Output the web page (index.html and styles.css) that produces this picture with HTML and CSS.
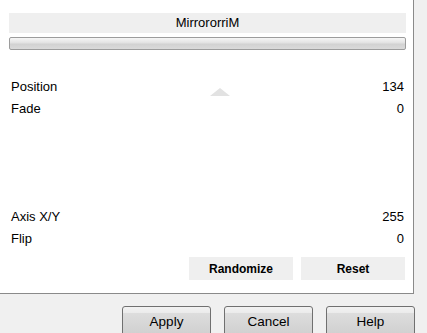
FILE: index.html
```html
<!DOCTYPE html>
<html lang="en">
<head>
<meta charset="UTF-8">
<meta name="viewport" content="width=device-width, initial-scale=1.0">
<title>MirrororriM</title>
<link rel="stylesheet" href="styles.css">
</head>
<body>

<div class="dialog">
    <!-- Filter panel -->
    <div class="panel">
        <div class="title">MirrororriM</div>
        <div class="progress"></div>

        <div class="params">
            <div class="marker"></div>
            <div class="row"><span>Position</span><span>134</span></div>
            <div class="row"><span>Fade</span><span>0</span></div>
            <div class="spacer"></div>
            <div class="row"><span>Axis X/Y</span><span>255</span></div>
            <div class="row"><span>Flip</span><span>0</span></div>
        </div>

        <div class="tools">
            <button class="tool">Randomize</button>
            <button class="tool">Reset</button>
        </div>
    </div>

    <!-- Dialog buttons -->
    <div class="actions">
        <button class="btn">Apply</button>
        <button class="btn">Cancel</button>
        <button class="btn">Help</button>
    </div>
</div>

</body>
</html>
```

FILE: styles.css
```css
/* Dialog styles */
body {
    margin: 0;
    padding: 0;
    background-color: #f0f0f0;
    font-family: "Liberation Sans", Arial, sans-serif;
    color: #000;
    overflow: hidden;
}

.dialog {
    width: 427px;
    height: 333px;
    display: flex;
    flex-direction: column;
    overflow: hidden;
}

.panel {
    flex-shrink: 0;
    width: 414px;
    height: 294px;
    box-sizing: border-box;
    padding: 13px 7px 0 9px;
    background-color: #fff;
    border-right: 1px solid #8a8a8a;
    border-bottom: 1px solid #8a8a8a;
}

.title {
    height: 20px;
    line-height: 20px;
    background-color: #efefef;
    text-align: center;
    font-size: 13px;
}

.progress {
    margin-top: 4px;
    height: 11px;
    border: 1px solid #9c9c9c;
    border-radius: 2px;
    background: linear-gradient(#f6f6f6, #e2e2e2 45%, #d2d2d2 55%, #dadada);
}

.params {
    position: relative;
    margin-top: 26px;
    padding: 0 2px;
}

.row {
    display: flex;
    justify-content: space-between;
    height: 22px;
    line-height: 22px;
    font-size: 13px;
}

.spacer {
    height: 86px;
}

.marker {
    position: absolute;
    left: 201px;
    top: 12px;
    width: 0;
    height: 0;
    border-left: 10px solid transparent;
    border-right: 10px solid transparent;
    border-bottom: 8px solid #e2e2e2;
}

.tools {
    display: flex;
    justify-content: flex-end;
    gap: 8px;
    margin-top: 7px;
    padding-right: 1px;
}

.tool {
    width: 104px;
    height: 23px;
    border: none;
    background-color: #efefef;
    font-family: "Liberation Sans", Arial, sans-serif;
    font-weight: bold;
    font-size: 12px;
    color: #000;
    padding: 0;
}

.actions {
    flex-shrink: 0;
    display: flex;
    align-items: flex-start;
    justify-content: flex-end;
    gap: 13px;
    padding: 12px 12px 0 0;
}

.btn {
    flex-shrink: 0;
    width: 89px;
    height: 31px;
    padding: 0;
    border: 1px solid #707070;
    border-radius: 3px;
    background: linear-gradient(#f2f2f2, #ebebeb 6px, #dddddd 6px, #cfcfcf);
    font-family: "Liberation Sans", Arial, sans-serif;
    font-size: 13.5px;
    color: #000;
}
```
